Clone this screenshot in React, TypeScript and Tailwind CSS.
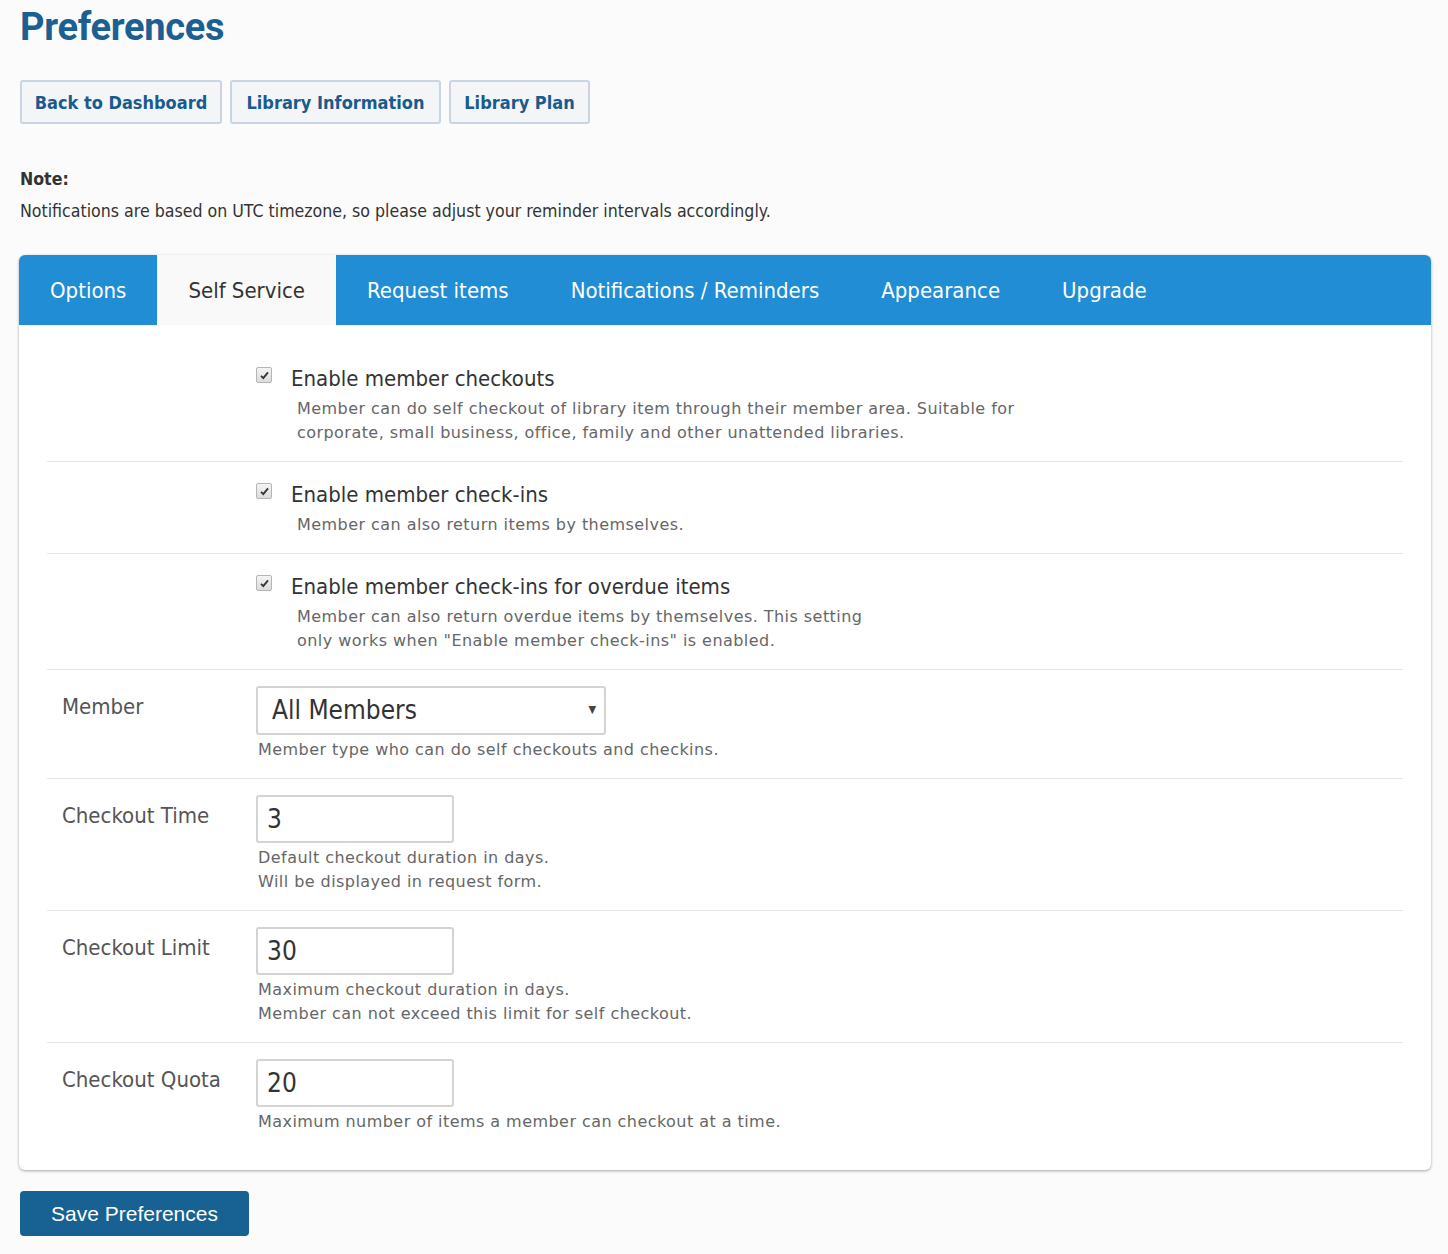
import React from "react";

const tahoma = { fontFamily: '"DejaVu Sans Condensed", "DejaVu Sans", sans-serif' };
const verdana = { fontFamily: '"DejaVu Sans", Verdana, sans-serif' };

function CheckRow({ label, desc, last }: { label: string; desc: string[]; last?: boolean }) {
  return (
    <div className={`flex pt-4 pb-4 ${last ? "" : "border-b border-[#e6e6e6]"}`}>
      <div className="w-[209px] shrink-0" />
      <div>
        <div className="flex items-center h-8">
          <span className="w-4 h-4 mr-[19px] -mt-[6px] border border-[#b5b5b5] rounded-[2px] bg-gradient-to-b from-[#f4f4f4] to-[#dcdcdc] flex items-center justify-center">
            <svg viewBox="0 0 12 12" className="w-[11px] h-[11px]"><path d="M2.2 6.3 L4.7 8.8 L9.8 2.6" fill="none" stroke="#333" strokeWidth="2" /></svg>
          </span>
          <span className="text-[22px] text-[#333]">{label}</span>
        </div>
        <div className="mt-[3px] ml-[41px] text-[16px] leading-6 text-[#666] tracking-[0.45px]" style={verdana}>
          {desc.map((d) => (
            <div key={d}>{d}</div>
          ))}
        </div>
      </div>
    </div>
  );
}

function FieldRow({ label, children, help, last }: { label: string; children: React.ReactNode; help: string[]; last?: boolean }) {
  return (
    <div className={`flex pt-4 pb-4 ${last ? "" : "border-b border-[#e6e6e6]"}`}>
      <div className="w-[209px] shrink-0 pl-[15px] pt-[7px] text-[22px] leading-7 text-[#555]">{label}</div>
      <div>
        {children}
        <div className="mt-[3px] ml-[2px] text-[16px] leading-6 text-[#666] tracking-[0.45px]" style={verdana}>
          {help.map((h) => (
            <div key={h}>{h}</div>
          ))}
        </div>
      </div>
    </div>
  );
}

function NumInput({ value }: { value: string }) {
  return (
    <div className="w-[198px] h-12 border-2 border-[#d3d3d3] rounded-[3px] bg-white flex items-center pl-[9px] text-[26px] text-[#333]">
      {value}
    </div>
  );
}

export default function App() {
  const tabs = ["Options", "Self Service", "Request items", "Notifications / Reminders", "Appearance", "Upgrade"];
  const buttons: [string, string][] = [
    ["Back to Dashboard", "w-[202px]"],
    ["Library Information", "w-[211px]"],
    ["Library Plan", "w-[141px]"],
  ];
  return (
    <div className="min-h-[1254px] bg-[#fbfbfb] px-5 pt-[5px] pb-4" style={tahoma}>
      <h1 className="text-[38px] leading-[44px] font-bold text-[#1b5f93] tracking-[-0.3px]" style={{ fontFamily: "Roboto, sans-serif" }}>
        Preferences
      </h1>
      <div className="flex gap-2 mt-[31px]">
        {buttons.map(([b, w]) => (
          <button key={b} className={`${w} h-[44px] border-2 border-[#c7d6e2] rounded-[3px] bg-[#f4f5f6] text-[#1a5b8e] font-bold text-[18px]`}>
            {b}
          </button>
        ))}
      </div>
      <div className="mt-[39px] text-[#333] text-[17.6px] leading-8">
        <div className="font-bold">Note:</div>
        <div>Notifications are based on UTC timezone, so please adjust your reminder intervals accordingly.</div>
      </div>
      <div className="mt-[28px] -ml-px w-[1412px] rounded-[6px] bg-white shadow-[0_1px_3px_rgba(0,0,0,0.35)] overflow-hidden">
        <div className="flex h-[70px] bg-[#208dd5]">
          {tabs.map((t) => (
            <div
              key={t}
              className={`px-[31px] flex items-center text-[22px] ${t === "Self Service" ? "bg-[#f9f9f9] text-[#333]" : "text-white"}`}
            >
              {t}
            </div>
          ))}
        </div>
        <div className="px-[28px] pt-[21px] pb-[20px]">
          <CheckRow
            label="Enable member checkouts"
            desc={[
              "Member can do self checkout of library item through their member area. Suitable for",
              "corporate, small business, office, family and other unattended libraries.",
            ]}
          />
          <CheckRow label="Enable member check-ins" desc={["Member can also return items by themselves."]} />
          <CheckRow
            label="Enable member check-ins for overdue items"
            desc={[
              "Member can also return overdue items by themselves. This setting",
              'only works when "Enable member check-ins" is enabled.',
            ]}
          />
          <FieldRow label="Member" help={["Member type who can do self checkouts and checkins."]}>
            <div className="w-[350px] h-[49px] border-2 border-[#d3d3d3] rounded-[3px] bg-white flex items-center justify-between pl-[14px] pr-[8px] text-[26px] text-[#333]">
              <span>All Members</span>
              <span className="text-[11px] text-[#444]">▼</span>
            </div>
          </FieldRow>
          <FieldRow label="Checkout Time" help={["Default checkout duration in days.", "Will be displayed in request form."]}>
            <NumInput value="3" />
          </FieldRow>
          <FieldRow label="Checkout Limit" help={["Maximum checkout duration in days.", "Member can not exceed this limit for self checkout."]}>
            <NumInput value="30" />
          </FieldRow>
          <FieldRow label="Checkout Quota" help={["Maximum number of items a member can checkout at a time."]} last>
            <NumInput value="20" />
          </FieldRow>
        </div>
      </div>
      <button
        className="mt-[21px] w-[229px] h-[45px] rounded-[4px] bg-[#176293] text-white text-[21px]"
        style={{ fontFamily: '"Liberation Sans", Arial, sans-serif' }}
      >
        Save Preferences
      </button>
    </div>
  );
}
